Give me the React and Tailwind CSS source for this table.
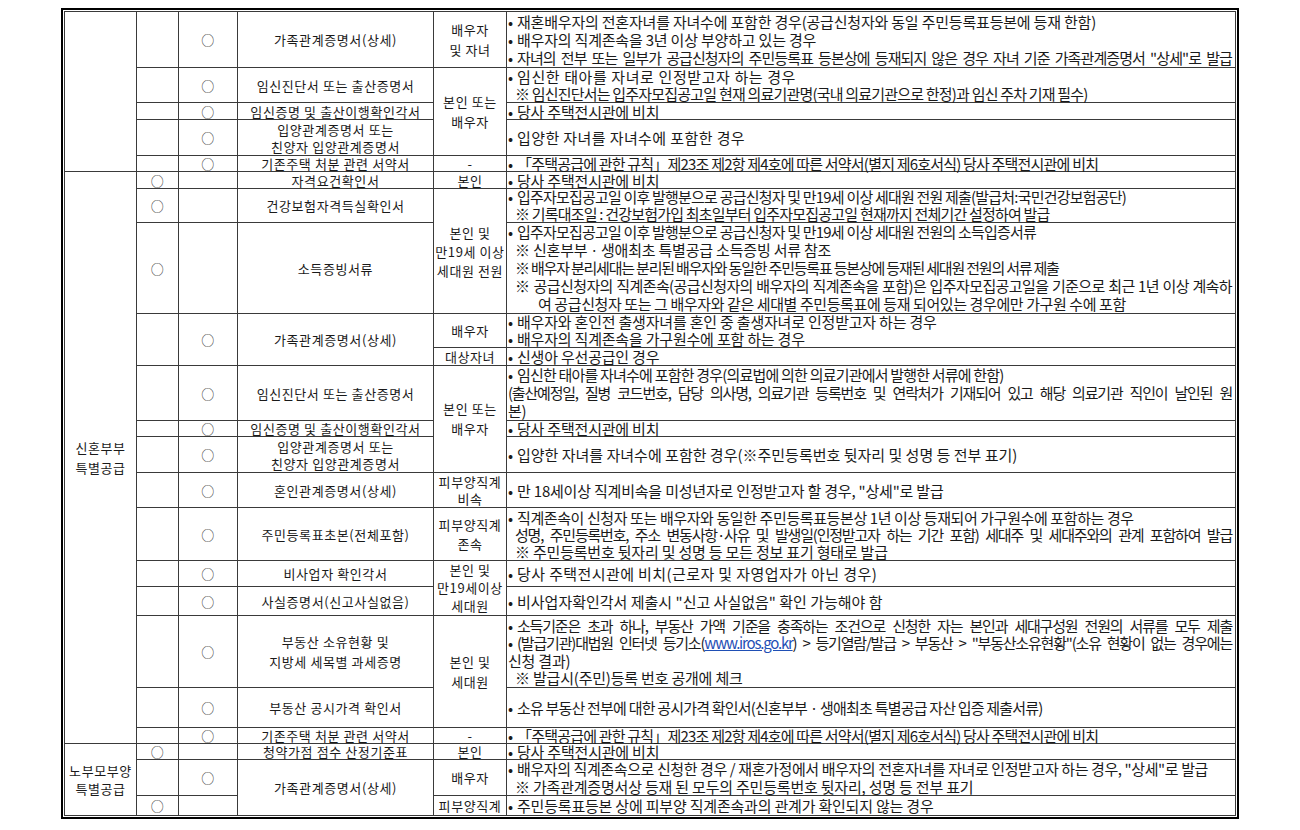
import React from 'react';

const line = 'border border-[#3a3a3a]';

function C({ children, className = 'leading-[15px]', ...rest }) {
  return (
    <td className={`${line} p-0 text-center align-middle text-[13px] tracking-[0.6px] ${className}`} {...rest}>
      {children}
    </td>
  );
}

function O() {
  return <span className="text-[13px] text-[#333]">○</span>;
}

function D({ children, className = 'leading-[15px]', ...rest }) {
  return (
    <td className={`${line} p-0 text-left align-middle text-[15px] ${className}`} {...rest}>
      {children}
    </td>
  );
}

// bullet is a fixed box so justified lines don't stretch the gap after it
const B = () => <span className="inline-block w-[9px] tracking-normal">•</span>;

// i: 0 = at cell edge, 1 = ※ indent, 2 = hanging continuation
// t: letter spacing of the line (the source squeezes long lines)
function L({ children, i = 0, j = false, t = 'tracking-[-0.2px]' }) {
  const pad = i === 0 ? 'pl-[1px]' : i === 1 ? 'pl-[8px]' : 'pl-[31px]';
  return (
    <div className={`h-[1lh] ${pad} pr-[3px] whitespace-nowrap ${j ? '[text-align-last:justify]' : ''} ${t}`}>
      {children}
    </div>
  );
}

const Rule = () => <>「주택공급에 관한 규칙」제23조 제2항 제4호에 따른 서약서(별지 제6호서식) 당사 주택전시관에 비치</>;

const long = 'tracking-[-0.8px]';
const mid = 'tracking-[-0.4px]';
const tight = 'tracking-[-1.2px]';

export default function App() {
  return (
    <div className="min-h-screen bg-white pl-[61px] pt-[8px] font-['Noto_Sans_CJK_KR','Noto_Sans',sans-serif] text-[#1a1a1a]">
      <div className="w-[1178px] border-2 border-black p-px">
        <table className="w-full table-fixed border-collapse border border-[#3a3a3a]">
          <colgroup>
            <col className="w-[72px]" />
            <col className="w-[42px]" />
            <col className="w-[59px]" />
            <col className="w-[196px]" />
            <col className="w-[73px]" />
            <col />
          </colgroup>
          <tbody>
            {/* 앞 구역 */}
            <tr className="h-[56px]">
              <C rowSpan={5}></C>
              <C></C>
              <C><O /></C>
              <C>가족관계증명서(상세)</C>
              <C className="leading-[20px]">배우자<br />및 자녀</C>
              <D className="leading-[18px]">
                <L><B />재혼배우자의 전혼자녀를 자녀수에 포함한 경우(공급신청자와 동일 주민등록표등본에 등재 한함)</L>
                <L><B />배우자의 직계존속을 3년 이상 부양하고 있는 경우</L>
                <L j t="tracking-[-0.9px]"><B />자녀의 전부 또는 일부가 공급신청자의 주민등록표 등본상에 등재되지 않은 경우 자녀 기준 가족관계증명서 "상세"로 발급</L>
              </D>
            </tr>
            <tr className="h-[35px]">
              <C></C>
              <C><O /></C>
              <C>임신진단서 또는 출산증명서</C>
              <C rowSpan={3} className="leading-[20px]">본인 또는<br />배우자</C>
              <D className="leading-[17px]">
                <L t="tracking-[0.6px]"><B />임신한 태아를 자녀로 인정받고자 하는 경우</L>
                <L i={1} t={long}>※ 임신진단서는 입주자모집공고일 현재 의료기관명(국내 의료기관으로 한정)과 임신 주차 기재 필수)</L>
              </D>
            </tr>
            <tr className="h-[17px]">
              <C></C>
              <C><O /></C>
              <C>임신증명 및 출산이행확인각서</C>
              <D><L><B />당사 주택전시관에 비치</L></D>
            </tr>
            <tr className="h-[36px]">
              <C></C>
              <C><O /></C>
              <C className="leading-[17px]">입양관계증명서 또는<br />친양자 입양관계증명서</C>
              <D><L t="tracking-[0.4px]"><B />입양한 자녀를 자녀수에 포함한 경우</L></D>
            </tr>
            <tr className="h-[16px]">
              <C></C>
              <C><O /></C>
              <C>기존주택 처분 관련 서약서</C>
              <C>-</C>
              <D><L t={long}><B /><Rule /></L></D>
            </tr>

            {/* 신혼부부 특별공급 */}
            <tr className="h-[17px]">
              <C rowSpan={15} className="leading-[20px]">신혼부부<br />특별공급</C>
              <C><O /></C>
              <C></C>
              <C>자격요건확인서</C>
              <C>본인</C>
              <D><L><B />당사 주택전시관에 비치</L></D>
            </tr>
            <tr className="h-[34px]">
              <C><O /></C>
              <C></C>
              <C>건강보험자격득실확인서</C>
              <C rowSpan={2} className="leading-[19px]">본인 및<br />만19세 이상<br />세대원 전원</C>
              <D className="leading-[16.5px]">
                <L t={long}><B />입주자모집공고일 이후 발행분으로 공급신청자 및 만19세 이상 세대원 전원 제출(발급처:국민건강보험공단)</L>
                <L i={1} t={long}>※ 기록대조일 : 건강보험가입 최초일부터 입주자모집공고일 현재까지 전체기간 설정하여 발급</L>
              </D>
            </tr>
            <tr className="h-[91px]">
              <C><O /></C>
              <C></C>
              <C>소득증빙서류</C>
              <D className="leading-[18px]">
                <L t={long}><B />입주자모집공고일 이후 발행분으로 공급신청자 및 만19세 이상 세대원 전원의 소득입증서류</L>
                <L i={1}>※ 신혼부부ㆍ생애최초 특별공급 소득증빙 서류 참조</L>
                <L i={1} t={tight}>※ 배우자 분리세대는 분리된 배우자와 동일한 주민등록표 등본상에 등재된 세대원 전원의 서류 제출</L>
                <L i={1} j t="tracking-[-0.6px]">※ 공급신청자의 직계존속(공급신청자의 배우자의 직계존속을 포함)은 입주자모집공고일을 기준으로 최근 1년 이상 계속하</L>
                <L i={2} t={mid}>여 공급신청자 또는 그 배우자와 같은 세대별 주민등록표에 등재 되어있는 경우에만 가구원 수에 포함</L>
              </D>
            </tr>
            <tr className="h-[34px]">
              <C rowSpan={2}></C>
              <C rowSpan={2}><O /></C>
              <C rowSpan={2}>가족관계증명서(상세)</C>
              <C>배우자</C>
              <D className="leading-[16.5px]">
                <L><B />배우자와 혼인전 출생자녀를 혼인 중 출생자녀로 인정받고자 하는 경우</L>
                <L><B />배우자의 직계존속을 가구원수에 포함 하는 경우</L>
              </D>
            </tr>
            <tr className="h-[18px]">
              <C>대상자녀</C>
              <D><L><B />신생아 우선공급인 경우</L></D>
            </tr>
            <tr className="h-[55px]">
              <C></C>
              <C><O /></C>
              <C>임신진단서 또는 출산증명서</C>
              <C rowSpan={3} className="leading-[20px]">본인 또는<br />배우자</C>
              <D className="leading-[18px]">
                <L t={long}><B />임신한 태아를 자녀수에 포함한 경우(의료법에 의한 의료기관에서 발행한 서류에 한함)</L>
                <L j t={tight}>(출산예정일, 질병 코드번호, 담당 의사명, 의료기관 등록번호 및 연락처가 기재되어 있고 해당 의료기관 직인이 날인된 원</L>
                <L>본)</L>
              </D>
            </tr>
            <tr className="h-[16px]">
              <C></C>
              <C><O /></C>
              <C>임신증명 및 출산이행확인각서</C>
              <D><L><B />당사 주택전시관에 비치</L></D>
            </tr>
            <tr className="h-[36px]">
              <C></C>
              <C><O /></C>
              <C className="leading-[17px]">입양관계증명서 또는<br />친양자 입양관계증명서</C>
              <D><L t="tracking-[0px]"><B />입양한 자녀를 자녀수에 포함한 경우(※주민등록번호 뒷자리 및 성명 등 전부 표기)</L></D>
            </tr>
            <tr className="h-[35px]">
              <C></C>
              <C><O /></C>
              <C>혼인관계증명서(상세)</C>
              <C className="leading-[17px]">피부양직계<br />비속</C>
              <D><L><B />만 18세이상 직계비속을 미성년자로 인정받고자 할 경우, "상세"로 발급</L></D>
            </tr>
            <tr className="h-[53px]">
              <C></C>
              <C><O /></C>
              <C>주민등록표초본(전체포함)</C>
              <C className="leading-[19px]">피부양직계<br />존속</C>
              <D className="leading-[17px]">
                <L t={mid}><B />직계존속이 신청자 또는 배우자와 동일한 주민등록표등본상 1년 이상 등재되어 가구원수에 포함하는 경우</L>
                <L i={1} j t={tight}>성명, 주민등록번호, 주소 변동사항·사유 및 발생일(인정받고자 하는 기간 포함) 세대주 및 세대주와의 관계 포함하여 발급</L>
                <L i={1}>※ 주민등록번호 뒷자리 및 성명 등 모든 정보 표기 형태로 발급</L>
              </D>
            </tr>
            <tr className="h-[26px]">
              <C></C>
              <C><O /></C>
              <C>비사업자 확인각서</C>
              <C rowSpan={2} className="leading-[18px]">본인 및<br />만19세이상<br />세대원</C>
              <D><L t="tracking-[0.4px]"><B />당사 주택전시관에 비치(근로자 및 자영업자가 아닌 경우)</L></D>
            </tr>
            <tr className="h-[29px]">
              <C></C>
              <C><O /></C>
              <C>사실증명서(신고사실없음)</C>
              <D><L t="tracking-[0px]"><B />비사업자확인각서 제출시 "신고 사실없음" 확인 가능해야 함</L></D>
            </tr>
            <tr className="h-[72px]">
              <C></C>
              <C><O /></C>
              <C className="leading-[20px]">부동산 소유현황 및<br />지방세 세목별 과세증명</C>
              <C rowSpan={2} className="leading-[20px]">본인 및<br />세대원</C>
              <D className="leading-[17.5px]">
                <L j t={tight}><B />소득기준은 초과 하나, 부동산 가액 기준을 충족하는 조건으로 신청한 자는 본인과 세대구성원 전원의 서류를 모두 제출</L>
                <L j t="tracking-[-1.2px]">
                  <B />(발급기관)대법원 인터넷 등기소(<span className="text-[#1f4fb5] underline">www.iros.go.kr</span>) &gt; 등기열람/발급 &gt; 부동산 &gt; "부동산소유현황"(소유 현황이 없는 경우에는
                </L>
                <L>신청 결과)</L>
                <L i={1}>※ 발급시(주민)등록 번호 공개에 체크</L>
              </D>
            </tr>
            <tr className="h-[40px]">
              <C></C>
              <C><O /></C>
              <C>부동산 공시가격 확인서</C>
              <D><L t={long}><B />소유 부동산 전부에 대한 공시가격 확인서(신혼부부ㆍ생애최초 특별공급 자산 입증 제출서류)</L></D>
            </tr>
            <tr className="h-[16px]">
              <C></C>
              <C><O /></C>
              <C>기존주택 처분 관련 서약서</C>
              <C>-</C>
              <D><L t={long}><B /><Rule /></L></D>
            </tr>

            {/* 노부모부양 특별공급 */}
            <tr className="h-[16px]">
              <C rowSpan={3} className="leading-[18px]">노부모부양<br />특별공급</C>
              <C><O /></C>
              <C></C>
              <C>청약가점 점수 산정기준표</C>
              <C>본인</C>
              <D><L><B />당사 주택전시관에 비치</L></D>
            </tr>
            <tr className="h-[36px]">
              <C></C>
              <C><O /></C>
              <C rowSpan={2}>가족관계증명서(상세)</C>
              <C>배우자</C>
              <D className="leading-[17.5px]">
                <L t={mid}><B />배우자의 직계존속으로 신청한 경우 / 재혼가정에서 배우자의 전혼자녀를 자녀로 인정받고자 하는 경우, "상세"로 발급</L>
                <L i={1}>※ 가족관계증명서상 등재 된 모두의 주민등록번호 뒷자리, 성명 등 전부 표기</L>
              </D>
            </tr>
            <tr className="h-[20px]">
              <C><O /></C>
              <C></C>
              <C>피부양직계</C>
              <D><L><B />주민등록표등본 상에 피부양 직계존속과의 관계가 확인되지 않는 경우</L></D>
            </tr>
          </tbody>
        </table>
      </div>
    </div>
  );
}
